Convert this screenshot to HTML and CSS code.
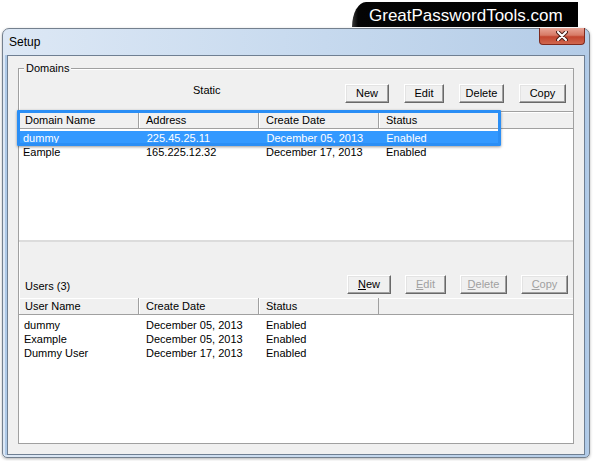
FILE: index.html
```html
<!DOCTYPE html>
<html lang="en-US">
  <head>
    <title>Setup</title>
    <meta charset="utf-8" />
    <link rel="stylesheet" href="styles.css">
  </head>
  <body>
    <div class="screen">
      <div class="brand-row">
        <div class="brand">GreatPasswordTools.com</div>
      </div>
      <div class="window">
        <div class="titlebar">
          <span class="title">Setup</span>
          <button class="close" type="button">
            <svg width="12" height="10" viewBox="0 0 12 10">
              <path d="M2 1 L10 9 M10 1 L2 9" stroke="#4b1f18" stroke-width="4" stroke-linecap="round" />
              <path d="M2 1 L10 9 M10 1 L2 9" stroke="#ffffff" stroke-width="2" stroke-linecap="round" />
            </svg>
          </button>
        </div>
        <div class="client">
          <div class="group">
            <span class="group-label">Domains</span>
            <div class="toolbar top-bar">
              <span class="caption static">Static</span>
              <div class="buttons">
                <button class="btn w44">New</button>
                <button class="btn w40">Edit</button>
                <button class="btn w45">Delete</button>
                <button class="btn w47">Copy</button>
              </div>
            </div>
            <div class="panel">
              <div class="list domains">
                <div class="lv-head">
                  <span class="col">Domain Name</span>
                  <span class="col">Address</span>
                  <span class="col">Create Date</span>
                  <span class="col">Status</span>
                  <span class="fill"></span>
                </div>
                <div class="lv-body">
                  <div class="lv-row selected">
                    <span class="cell">dummy</span>
                    <span class="cell">225.45.25.11</span>
                    <span class="cell">December 05, 2013</span>
                    <span class="cell">Enabled</span>
                  </div>
                  <div class="lv-row">
                    <span class="cell">Eample</span>
                    <span class="cell">165.225.12.32</span>
                    <span class="cell">December 17, 2013</span>
                    <span class="cell">Enabled</span>
                  </div>
                </div>
                <div class="focus-ring"></div>
              </div>
              <div class="toolbar users-bar">
                <span class="caption">Users (3)</span>
                <div class="buttons tight">
                  <button class="btn w44"><u>N</u>ew</button>
                  <button class="btn w41" disabled><u>E</u>dit</button>
                  <button class="btn w47" disabled><u>D</u>elete</button>
                  <button class="btn w47" disabled><u>C</u>opy</button>
                </div>
              </div>
              <div class="list users">
                <div class="lv-head">
                  <span class="col">User Name</span>
                  <span class="col">Create Date</span>
                  <span class="col">Status</span>
                  <span class="fill"></span>
                </div>
                <div class="lv-body">
                  <div class="lv-row">
                    <span class="cell">dummy</span>
                    <span class="cell">December 05, 2013</span>
                    <span class="cell">Enabled</span>
                  </div>
                  <div class="lv-row">
                    <span class="cell">Example</span>
                    <span class="cell">December 05, 2013</span>
                    <span class="cell">Enabled</span>
                  </div>
                  <div class="lv-row">
                    <span class="cell">Dummy User</span>
                    <span class="cell">December 17, 2013</span>
                    <span class="cell">Enabled</span>
                  </div>
                </div>
              </div>
            </div>
          </div>
        </div>
      </div>
    </div>
  </body>
</html>
```

FILE: styles.css
```css
html {
  box-sizing: border-box;
}
*,
*::before,
*::after {
  box-sizing: inherit;
}
body {
  margin: 0;
  background: #ffffff;
  font-family: "Liberation Sans", Arial, Helvetica, sans-serif;
  font-size: 11px;
  color: #000000;
}
.screen {
  width: 594px;
  height: 461px;
  overflow: hidden;
}

/* site banner */
.brand-row {
  display: flex;
  justify-content: flex-end;
  height: 28px;
  padding-top: 2px;
  padding-right: 16px;
}
.brand {
  width: 226px;
  height: 25px;
  padding: 2px 0 0 17px;
  line-height: 23px;
  font-size: 17px;
  color: #ffffff;
  background: linear-gradient(90deg, #3a3a3a 0, #050505 6px, #000000);
  border-top-left-radius: 14px 25px;
}

/* window frame */
.window {
  width: 588px;
  margin-left: 2px;
  padding: 0 4px 2px;
  border: 1px solid #74808e;
  border-radius: 7px 7px 5px 5px;
  background: linear-gradient(90deg, #dde8f5, #c6d9ee 55%, #b4cce7);
  box-shadow: 0 1px 3px rgb(0 0 0 / 30%);
}
.titlebar {
  display: flex;
  align-items: center;
  height: 26px;
  padding: 0 0 1px 2px;
}
.title {
  font-size: 12px;
}
.close {
  display: flex;
  align-items: center;
  justify-content: center;
  align-self: flex-start;
  width: 46px;
  height: 17px;
  margin: -1px 0 0 auto;
  padding: 0;
  border: 1px solid #7e2a1e;
  border-top: none;
  border-radius: 0 0 4px 4px;
  background: linear-gradient(#e9a597, #d77a66 45%, #c2452f 55%, #d0674e);
}
.client {
  padding: 12px 0 10px;
  border: 1px solid #6f7f92;
  background: #f0f0f0;
  box-shadow: -2px 0 0 #aec9e7, 2px 0 0 #aec9e7;
}

/* group box */
.group {
  position: relative;
  margin: 0 10px;
  border: 1px solid #a0a0a0;
  box-shadow: inset 1px 1px #ffffff;
}
.group-label {
  position: absolute;
  top: -7px;
  left: 5px;
  padding: 0 2px;
  line-height: 13px;
  background: #f0f0f0;
}
.toolbar {
  display: flex;
}
.top-bar {
  height: 42px;
  padding: 15px 7px 0 0;
  align-items: flex-start;
}
.caption {
  line-height: 13px;
}
.static {
  margin-left: 174px;
}
.buttons {
  display: flex;
  gap: 15px;
  margin-left: auto;
}
.buttons.tight {
  gap: 14px;
}
.btn {
  height: 19px;
  padding: 0;
  font: inherit;
  line-height: 15px;
  color: #000000;
  background: #f0f0f0;
  border: 1px solid;
  border-color: #ffffff #696969 #696969 #ffffff;
  box-shadow: inset -1px -1px #a0a0a0, inset 1px 1px #e3e3e3;
}
.btn:disabled {
  color: #a0a0a0;
}
.w40 { width: 40px; }
.w41 { width: 41px; }
.w44 { width: 44px; }
.w45 { width: 45px; }
.w47 { width: 47px; }

/* list views */
.panel {
  border-top: 1px solid #a0a0a0;
}
.list {
  position: relative;
}
.lv-head {
  display: flex;
  height: 17px;
  padding-top: 1px;
  line-height: 15px;
  background: #f0f0f0;
  border-bottom: 1px solid #a0a0a0;
  box-shadow: inset 0 1px #ffffff;
}
.lv-head .col {
  width: 120px;
  margin-top: -1px;
  padding: 1px 0 0 7px;
  border-right: 1px solid #a0a0a0;
  box-shadow: inset 1px 0 #ffffff;
}
.lv-head .col:first-child {
  padding-left: 6px;
}
.lv-head .fill {
  flex: 1;
}
.lv-body {
  background: #ffffff;
}
.domains .lv-body {
  height: 111px;
  padding-top: 2px;
}
.users .lv-body {
  height: 128px;
  padding-top: 3px;
}
.lv-row {
  display: flex;
  width: 480px;
  height: 14px;
  line-height: 14px;
}
.lv-row .cell {
  width: 120px;
  padding-left: 7px;
  white-space: nowrap;
}
.lv-row .cell:first-child {
  padding-left: 4px;
}
.users .lv-row .cell:first-child {
  padding-left: 5px;
}
.lv-row.selected {
  margin-left: 1px;
  width: 479px;
  color: #ffffff;
  background: #3399ff;
}
.lv-row.selected .cell:first-child {
  padding-left: 3px;
}
.focus-ring {
  position: absolute;
  top: -2px;
  left: -2px;
  width: 484px;
  height: 36px;
  border: 3px solid #2a8ef5;
  border-radius: 1px;
  box-shadow: 0 1px 3px rgb(0 0 0 / 40%);
  pointer-events: none;
}
.users-bar {
  height: 58px;
  padding: 0 5px 4px 6px;
  align-items: flex-end;
  border-top: 2px solid #dcdcdc;
}
.users-bar .caption {
  margin-bottom: 1px;
}
```
